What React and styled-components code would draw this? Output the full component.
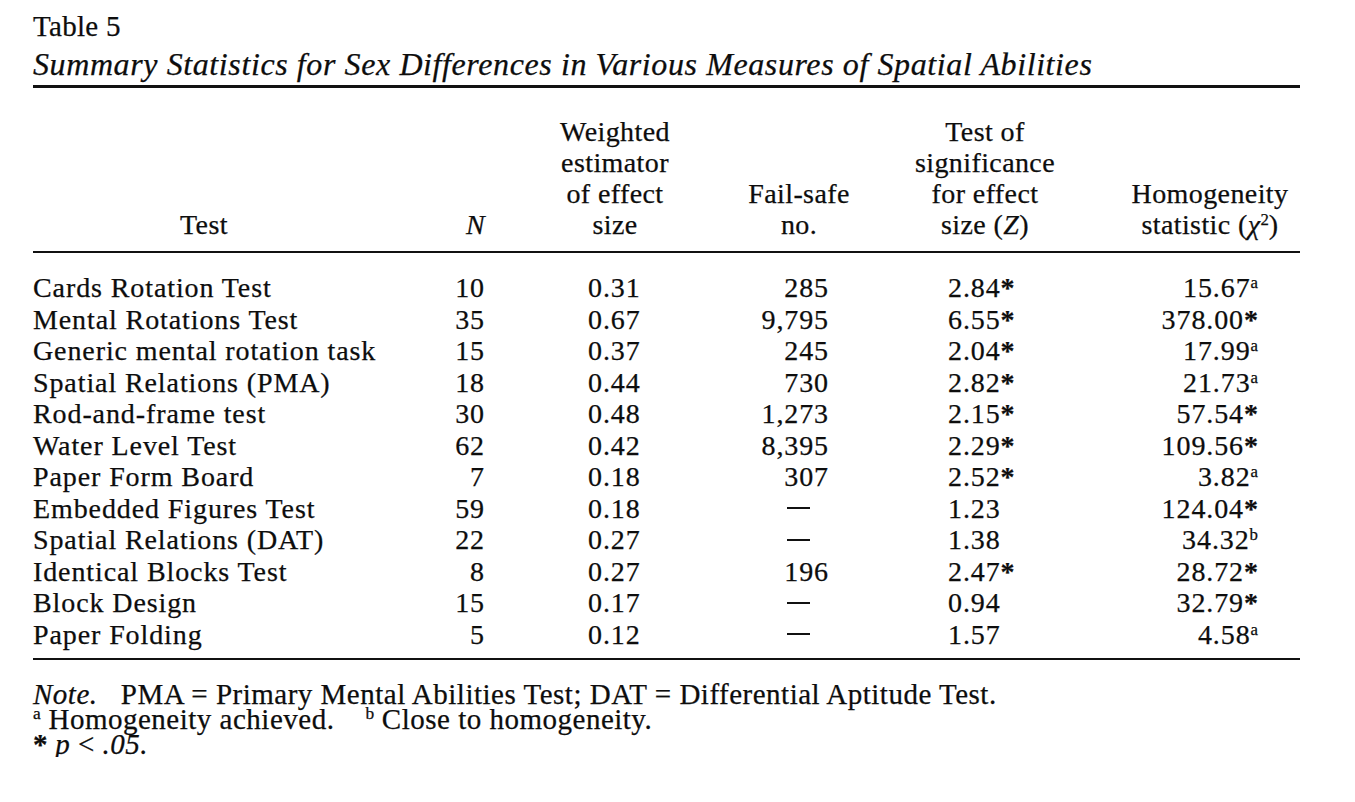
import styled, { createGlobalStyle } from "styled-components";

const GlobalStyle = createGlobalStyle`
  html, body {
    margin: 0;
    padding: 0;
    background: #fff;
  }
  body {
    font-family: "Liberation Serif", "Times New Roman", serif;
    color: #0d0d0d;
    -webkit-text-stroke: 0.25px #0d0d0d;
  }
`;

const rows = [
  ["Cards Rotation Test", "10", "0.31", "285", "2.84", true, "15.67", "a"],
  ["Mental Rotations Test", "35", "0.67", "9,795", "6.55", true, "378.00", "*"],
  ["Generic mental rotation task", "15", "0.37", "245", "2.04", true, "17.99", "a"],
  ["Spatial Relations (PMA)", "18", "0.44", "730", "2.82", true, "21.73", "a"],
  ["Rod-and-frame test", "30", "0.48", "1,273", "2.15", true, "57.54", "*"],
  ["Water Level Test", "62", "0.42", "8,395", "2.29", true, "109.56", "*"],
  ["Paper Form Board", "7", "0.18", "307", "2.52", true, "3.82", "a"],
  ["Embedded Figures Test", "59", "0.18", null, "1.23", false, "124.04", "*"],
  ["Spatial Relations (DAT)", "22", "0.27", null, "1.38", false, "34.32", "b"],
  ["Identical Blocks Test", "8", "0.27", "196", "2.47", true, "28.72", "*"],
  ["Block Design", "15", "0.17", null, "0.94", false, "32.79", "*"],
  ["Paper Folding", "5", "0.12", null, "1.57", false, "4.58", "a"],
];

const Page = styled.div`
  padding: 10px 0 0 33px;
  width: 1267px;
`;

const Label = styled.div`
  font-size: 29px;
  line-height: 32px;
  letter-spacing: 0.3px;
`;

const Title = styled.div`
  font-size: 32px;
  line-height: 36px;
  font-style: italic;
  margin-top: 4px;
  letter-spacing: 0.6px;
`;

const Rule = styled.div`
  height: ${(p) => p.$thick}px;
  background: #111;
  margin-top: ${(p) => p.$top || 0}px;
`;

const Grid = styled.div`
  display: grid;
  grid-template-columns: 387px 80px 230px 130px 240px 200px;
  font-size: 28px;
  letter-spacing: 0.9px;
`;

const Head = styled.div`
  display: flex;
  flex-direction: column;
  justify-content: flex-end;
  text-align: ${(p) => p.$align || "center"};
  line-height: 31px;
  letter-spacing: 0.4px;
  padding: 28px ${(p) => p.$pr || 0}px 11px ${(p) => p.$pl || 0}px;
`;

const Cell = styled.div`
  line-height: 31.5px;
  white-space: nowrap;
  text-align: ${(p) => p.$align || "left"};
  padding: 0 ${(p) => p.$pr || 0}px 0 ${(p) => p.$pl || 0}px;
`;

const Body = styled.div`
  display: contents;
`;

const Spacer = styled.div`
  grid-column: 1 / -1;
  height: ${(p) => p.$h}px;
`;

const Mark = styled.sup`
  font-size: 0.6em;
  line-height: 0;
  vertical-align: 0.55em;
  letter-spacing: 0;
`;

const Star = styled.span`
  font-weight: bold;
  letter-spacing: 0;
`;

const Dash = styled.span`
  display: inline-block;
  width: 23px;
  height: 2px;
  margin-right: 19px;
  background: #111;
  vertical-align: 0.3em;
`;

const Ital = styled.i`
  font-style: italic;
`;

const Notes = styled.div`
  margin-top: 22px;
  font-size: 29px;
  line-height: 25px;
  letter-spacing: 0.5px;
`;

const NoteLine = styled.div`
  white-space: pre;
`;

function Suffix({ m }) {
  if (m === "*") return <Star>*</Star>;
  return <Mark>{m}</Mark>;
}

export default function App() {
  return (
    <Page>
      <GlobalStyle />
      <Label>Table 5</Label>
      <Title>
        Summary Statistics for Sex Differences in Various Measures of Spatial
        Abilities
      </Title>
      <Rule $thick={3} $top={3} />
      <Grid>
        <Head $pr={45}>Test</Head>
        <Head $align="right" $pr={15}>
          <Ital>N</Ital>
        </Head>
        <Head>
          <span>Weighted</span>
          <span>estimator</span>
          <span>of effect</span>
          <span>size</span>
        </Head>
        <Head $pl={8}>
          <span>Fail-safe</span>
          <span>no.</span>
        </Head>
        <Head $pl={10}>
          <span>Test of</span>
          <span>significance</span>
          <span>for effect</span>
          <span>
            size (<Ital>Z</Ital>)
          </span>
        </Head>
        <Head $pl={20}>
          <span>Homogeneity</span>
          <span>
            statistic (<Ital>χ</Ital>
            <Mark>2</Mark>)
          </span>
        </Head>
      </Grid>
      <Rule $thick={2} />
      <Grid>
        <Spacer $h={19} />
        {rows.map((r) => (
          <Body key={r[0]}>
            <Cell>{r[0]}</Cell>
            <Cell $align="right" $pr={15}>
              {r[1]}
            </Cell>
            <Cell $pl={88}>{r[2]}</Cell>
            <Cell $align="right" $pr={31}>
              {r[3] ? r[3] : <Dash />}
            </Cell>
            <Cell $pl={88}>
              {r[4]}
              {r[5] && <Star>*</Star>}
            </Cell>
            <Cell $align="right" $pr={42}>
              {r[6]}
              <Suffix m={r[7]} />
            </Cell>
          </Body>
        ))}
        <Spacer $h={8} />
      </Grid>
      <Rule $thick={2} />
      <Notes>
        <NoteLine>
          <Ital>Note.</Ital>
          {"   PMA = Primary Mental Abilities Test; DAT = Differential Aptitude Test."}
        </NoteLine>
        <NoteLine>
          <Mark>a</Mark>
          {" Homogeneity achieved.    "}
          <Mark>b</Mark>
          {" Close to homogeneity."}
        </NoteLine>
        <NoteLine>
          <Star>*</Star> <Ital>p</Ital> &lt; <Ital>.05.</Ital>
        </NoteLine>
      </Notes>
    </Page>
  );
}
